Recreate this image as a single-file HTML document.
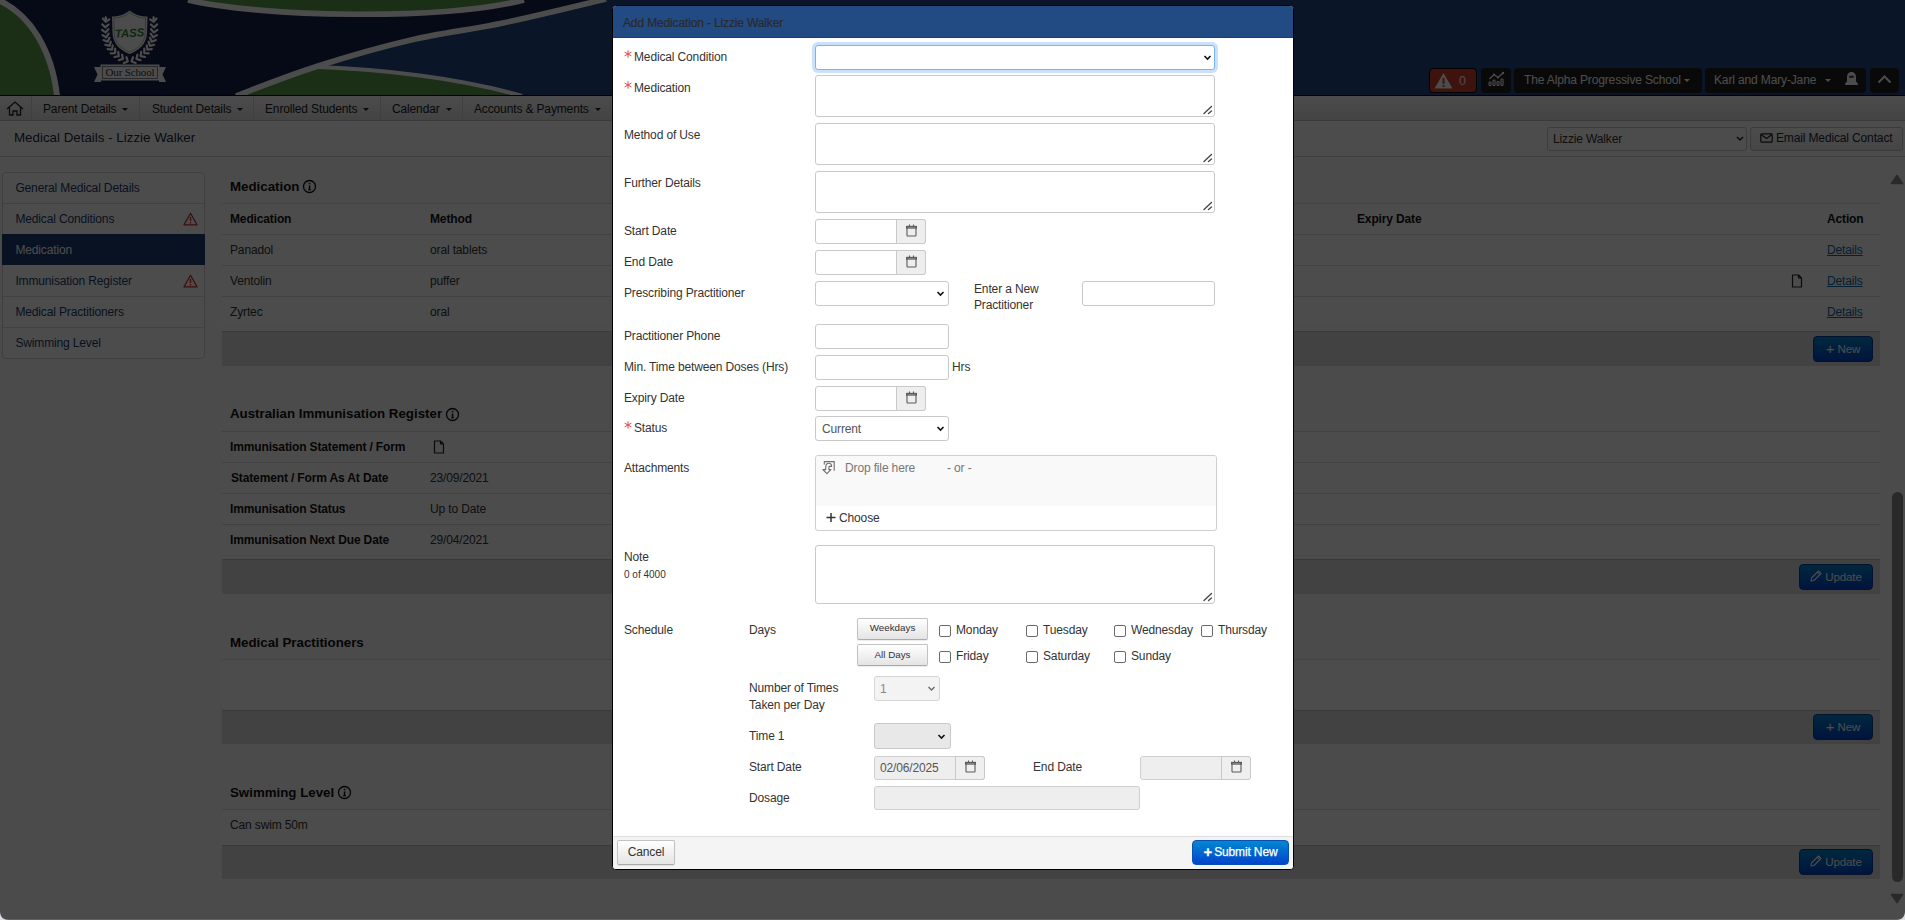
<!DOCTYPE html>
<html><head><meta charset="utf-8">
<style>
*{box-sizing:border-box}
html,body{margin:0;padding:0;width:1905px;height:920px;overflow:hidden;background:#fff}
body{font-family:"Liberation Sans",sans-serif;font-size:12px;letter-spacing:-0.14px;color:#333;position:relative}
.a{position:absolute}
.t{position:absolute;white-space:nowrap;line-height:14px}
.m{}
.navsep{position:absolute;top:96px;width:1px;height:24px;background:#d6d6d6}
.caret{display:inline-block;width:0;height:0;border-left:3px solid transparent;border-right:3px solid transparent;border-top:3px solid #222;vertical-align:middle;margin-left:6px;margin-top:-1px}
.btnp{border-radius:4px;background:linear-gradient(#0088cc,#0044cc);border:1px solid #0a3f99;color:#fff;text-align:center;line-height:24px;font-size:11.55px;white-space:nowrap}
.plus{font-size:15px;vertical-align:-1px;margin-right:3px}
.req{padding-left:10px}
.inp{border:1px solid #c9c9c9;border-radius:3px;background:#fff}
.dis{background:#f3f3f3;border-color:#d6d6d6}
.dis2{background:#eeeeee;border-color:#cfcfcf}
.addon{border:1px solid #c9c9c9;border-radius:0 3px 3px 0;background:#eeeeee}
.chev path{fill:none;stroke:#111;stroke-width:1.6}
.dchev path{stroke:#666;stroke-width:1.3}
.grip path{fill:none;stroke:#444;stroke-width:1.3;stroke-linecap:round}
.cal rect,.cal path{fill:none;stroke:#5a5a5a;stroke-width:1.1}
.cb{width:12px;height:12px;border:1px solid #6a6a6a;border-radius:2px;background:#fff}
.sbtn{letter-spacing:0;border:1px solid #c2c2c2;border-bottom-color:#aaa;border-radius:2px;background:linear-gradient(#ffffff,#e4e4e4);color:#333;text-align:center;font-size:9.8px;line-height:18px;white-space:nowrap;box-shadow:0 1px 1px rgba(0,0,0,.08)}
</style></head><body>
<!-- HEADER -->
<svg class="a" style="left:0;top:0" width="1905" height="96" viewBox="0 0 1905 96">
<rect width="1905" height="96" fill="#224a86"/>
<path d="M0,0 L606,0 L606,-1 C587.8,3.3 535.5,16.2 503,23 C470.5,29.8 441.8,32.8 411,40 C380.2,47.2 347.2,56.7 318,66 C288.8,75.3 252.3,89.8 236,96 L0,96 Z" fill="#17234f"/>
<path d="M-2,0 C30,14 52,50 57,96 L-2,96 Z" fill="#5b9d4f"/>
<path d="M-2,0 C30,14 52,50 57,96" fill="none" stroke="#fff" stroke-width="6"/>
<path d="M188,0 C260,17 440,21 524,0 Z" fill="#5b9d4f"/>
<path d="M188,0 C260,17 440,21 524,0" fill="none" stroke="#fff" stroke-width="5.6"/>
<path d="M318,66 C380,69 460,78 522,96 L236,96 C262,86 290,75 318,66 Z" fill="#5b9d4f"/>
<path d="M606,-1 C587.8,3.3 535.5,16.2 503,23 C470.5,29.8 441.8,32.8 411,40 C380.2,47.2 347.2,56.7 318,66 C288.8,75.3 252.3,89.8 236,96" fill="none" stroke="#fff" stroke-width="5.6"/>
<path d="M318,67 C380,69 460,78 522,96" fill="none" stroke="#fff" stroke-width="4.2"/>
<!-- logo -->
<g fill="#fff">
<path d="M129.7,10.5 C124,15 118,16.5 112,16.5 L112.5,33 C113,44 120,50 129.7,54 C139.5,50 146.5,44 147,33 L147.5,16.5 C141,16.5 135,15 129.7,10.5 Z"/><path d="M129.7,12.5 C124.5,16.5 119,18 113.8,18 L114.2,33 C114.8,43 121,48.5 129.7,52 C138.5,48.5 144.6,43 145.2,33 L145.6,18 C140.5,18 135,16.5 129.7,12.5 Z" fill="none" stroke="#888" stroke-width="0.6"/>
<g id="laurL"><ellipse cx="105.8" cy="18.5" rx="1.3" ry="2.6"/><path d="M102.9,18.5 L105.7,21.9 L109.3,19.3 M102.2,24.3 L105.3,27.4 L108.6,24.5 M102.0,29.8 L105.5,32.5 L108.4,29.2 M102.5,35.1 L106.2,37.3 L108.7,33.7 M103.5,40.1 L107.6,41.8 L109.5,37.8 M105.2,44.8 L109.5,45.9 L110.8,41.7 M107.6,49.2 L112.0,49.7 L112.7,45.3 M110.7,53.3 L115.1,53.1 L115.1,48.7 M114.4,57.0 L118.8,56.2 L118.2,51.8 M118.8,60.2 L123.0,58.9 L122.0,54.7 M123.8,63.1 L127.8,61.4 L126.4,57.2" fill="none" stroke="#fff" stroke-width="2.2" stroke-linecap="round" stroke-linejoin="round"/></g>
<use href="#laurL" transform="translate(259.4 0) scale(-1 1)"/>
<path d="M94,67 L101,67 L101,82 L94,82 L97.5,74.5 Z"/>
<path d="M166,67 L159,67 L159,82 L166,82 L162.5,74.5 Z"/>
<rect x="100.5" y="64.5" width="59" height="16"/>
</g>
<rect x="102.5" y="66.5" width="55" height="12" fill="none" stroke="#555" stroke-width="0.7"/>
<text x="130" y="76" text-anchor="middle" font-family="Liberation Serif" font-size="11" fill="#333">Our School</text>
<text x="129.5" y="37" text-anchor="middle" font-family="Liberation Sans" font-weight="bold" font-style="italic" font-size="11.5" fill="#2f8a2a" transform="rotate(-3 129.5 33)">TASS</text>
</svg>
<div class="a" style="left:0;top:95px;width:1905px;height:1px;background:#000"></div>

<!-- header buttons -->
<div class="a" style="left:1429px;top:68px;width:48px;height:25px;background:#cf3f2c;border:1px solid #000;border-radius:4px"></div>
<svg class="a" style="left:1434px;top:72px" width="20" height="17" viewBox="0 0 20 17"><path d="M9.5,1 L18.5,16.5 L0.5,16.5 Z" fill="#fff"/><rect x="8.6" y="6" width="1.9" height="6" fill="#cf3f2c"/><rect x="8.6" y="13" width="1.9" height="1.9" fill="#cf3f2c"/></svg>
<div class="t" style="left:1459px;top:74px;color:#fff;font-size:12.5px">0</div>
<div class="a" style="left:1481px;top:68px;width:30px;height:25px;background:#1f1f1f;border-radius:4px"></div>
<svg class="a" style="left:1488px;top:71px" width="17" height="15" viewBox="0 0 17 15"><path d="M1.5,8 L6,3.5 L10,6.5 L15,2" fill="none" stroke="#fff" stroke-width="1.3"/><circle cx="6" cy="3.5" r="1.1" fill="#fff"/><circle cx="10" cy="6.5" r="1.1" fill="#fff"/><circle cx="15" cy="2" r="1.2" fill="#fff"/><g fill="none" stroke="#fff" stroke-width="1.1"><rect x="1" y="11" width="2" height="3.5" rx="0.8"/><rect x="5" y="9" width="2" height="5.5" rx="0.8"/><rect x="9" y="10.5" width="2" height="4" rx="0.8"/><rect x="13" y="8" width="2" height="6.5" rx="0.8"/></g></svg>
<div class="a" style="left:1514px;top:68px;width:188px;height:25px;background:#1f1f1f;border-radius:4px"></div>
<div class="t" style="left:1524px;top:73px;color:#fff">The Alpha Progressive School</div>
<div class="a" style="left:1684px;top:79px;border-left:3px solid transparent;border-right:3px solid transparent;border-top:3px solid #fff"></div>
<div class="a" style="left:1705px;top:68px;width:161px;height:25px;background:#1f1f1f;border-radius:4px"></div>
<div class="t" style="left:1714px;top:73px;color:#fff">Karl and Mary-Jane</div>
<div class="a" style="left:1825px;top:79px;border-left:3px solid transparent;border-right:3px solid transparent;border-top:3px solid #fff"></div>
<svg class="a" style="left:1844px;top:71px" width="15" height="15" viewBox="0 0 15 15"><path d="M7.5,1 C4.2,1 3,3.5 3,6.5 L3,10 C3,11 1.2,11.8 1,13 C1,13.6 1.5,14 2.2,14 L12.8,14 C13.5,14 14,13.6 14,13 C13.8,11.8 12,11 12,10 L12,6.5 C12,3.5 10.8,1 7.5,1 Z" fill="#fff"/><rect x="5.2" y="4.8" width="4.6" height="2" rx="0.6" fill="#333"/></svg>
<div class="a" style="left:1870px;top:68px;width:29px;height:25px;background:#1f1f1f;border-radius:4px"></div>
<svg class="a" style="left:1877px;top:74px" width="15" height="10" viewBox="0 0 15 10"><path d="M1.5,8.5 L7.5,2.5 L13.5,8.5" fill="none" stroke="#fff" stroke-width="2"/></svg>

<!-- NAV -->
<div class="a" style="left:0;top:96px;width:1905px;height:25px;background:linear-gradient(#fdfdfd,#e2e2e2);border-bottom:1px solid #c4c4c4"></div>
<svg class="a" style="left:6px;top:101px" width="18" height="15" viewBox="0 0 18 15" fill="none" stroke="#222" stroke-width="1.3"><path d="M1,8 L9,1 L17,8"/><path d="M3.5,6 L3.5,14 L7,14 L7,10 L11,10 L11,14 L14.5,14 L14.5,6"/></svg>
<div class="navsep" style="left:31px"></div>
<div class="t" style="left:43px;top:102px;color:#222">Parent Details<span class="caret"></span></div>
<div class="navsep" style="left:139px"></div>
<div class="t" style="left:152px;top:102px;color:#222">Student Details<span class="caret"></span></div>
<div class="navsep" style="left:253px"></div>
<div class="t" style="left:265px;top:102px;color:#222">Enrolled Students<span class="caret"></span></div>
<div class="navsep" style="left:380px"></div>
<div class="t" style="left:392px;top:102px;color:#222">Calendar<span class="caret"></span></div>
<div class="navsep" style="left:462px"></div>
<div class="t" style="left:474px;top:102px;color:#222">Accounts &amp; Payments<span class="caret"></span></div>
<div class="navsep" style="left:612px"></div>

<!-- TITLE BAR -->
<div class="a" style="left:0;top:121px;width:1905px;height:36px;background:#fff;border-bottom:1px solid #d8d8d8"></div>
<div class="t" style="left:14px;top:130px;font-size:13.35px;letter-spacing:0;line-height:16px;color:#1a2a44">Medical Details - Lizzie Walker</div>
<div class="a" style="left:1547px;top:127px;width:200px;height:24px;background:#fff;border:1px solid #c8c8c8;border-radius:3px"></div>
<div class="t" style="left:1553px;top:132px;color:#333">Lizzie Walker</div>
<svg class="a" style="left:1736px;top:136px" width="8" height="6" viewBox="0 0 8 6"><path d="M1,1 L4,4 L7,1" fill="none" stroke="#222" stroke-width="1.5"/></svg>
<div class="a" style="left:1750px;top:127px;width:153px;height:24px;background:linear-gradient(#fff,#e8e8e8);border:1px solid #c4c4c4;border-radius:3px"></div>
<svg class="a" style="left:1760px;top:133px" width="13" height="10" viewBox="0 0 13 10" fill="none" stroke="#222" stroke-width="1.2"><rect x="0.8" y="0.8" width="11.4" height="8.4" rx="1"/><path d="M1,1.5 L6.5,5.5 L12,1.5"/></svg>
<div class="t" style="left:1776px;top:131px;color:#1a2a44">Email Medical Contact</div>

<!-- BODY -->
<div class="a" style="left:0;top:157px;width:1905px;height:763px;background:#fbfbfb"></div>
<!-- SIDEBAR -->
<div class="a" style="left:2px;top:172px;width:203px;height:187px;background:#fff;border:1px solid #d4d4d4;border-radius:4px"></div>
<div class="a" style="left:3px;top:203px;width:201px;height:1px;background:#dcdcdc"></div>
<div class="a" style="left:3px;top:296px;width:201px;height:1px;background:#dcdcdc"></div>
<div class="a" style="left:3px;top:327px;width:201px;height:1px;background:#dcdcdc"></div>
<div class="a" style="left:2px;top:234px;width:203px;height:31px;background:#1c3c72"></div>
<div class="t" style="left:15.4px;top:181px;color:#1d3b6c">General Medical Details</div>
<div class="t" style="left:15.4px;top:212px;color:#1d3b6c">Medical Conditions</div>
<div class="t" style="left:15.4px;top:243px;color:#fff">Medication</div>
<div class="t" style="left:15.4px;top:274px;color:#1d3b6c">Immunisation Register</div>
<div class="t" style="left:15.4px;top:305px;color:#1d3b6c">Medical Practitioners</div>
<div class="t" style="left:15.4px;top:336px;color:#1d3b6c">Swimming Level</div>
<svg class="a" style="left:183px;top:212px" width="15" height="14" viewBox="0 0 15 14"><path d="M7.5,1.2 L14,12.8 L1,12.8 Z" fill="none" stroke="#c9302c" stroke-width="1.3" stroke-linejoin="round"/><rect x="6.8" y="5" width="1.4" height="4" fill="#c9302c"/><rect x="6.8" y="10" width="1.4" height="1.4" fill="#c9302c"/></svg>
<svg class="a" style="left:183px;top:274px" width="15" height="14" viewBox="0 0 15 14"><path d="M7.5,1.2 L14,12.8 L1,12.8 Z" fill="none" stroke="#c9302c" stroke-width="1.3" stroke-linejoin="round"/><rect x="6.8" y="5" width="1.4" height="4" fill="#c9302c"/><rect x="6.8" y="10" width="1.4" height="1.4" fill="#c9302c"/></svg>

<!-- MEDICATION SECTION -->
<div class="a" style="left:222px;top:203px;width:1658px;height:128px;background:#fff"></div>
<div class="t" style="left:230px;top:179px;font-weight:bold;font-size:13.3px;letter-spacing:0;line-height:16px;color:#111">Medication</div>
<svg class="a" style="left:302px;top:179px" width="15" height="15" viewBox="0 0 15 15"><circle cx="7.5" cy="7.5" r="6" fill="none" stroke="#111" stroke-width="1.3"/><rect x="6.8" y="6.5" width="1.5" height="4.5" fill="#111"/><rect x="6.8" y="3.8" width="1.5" height="1.5" fill="#111"/><rect x="6" y="10.3" width="3" height="1" fill="#111"/></svg>
<div class="a" style="left:222px;top:203px;width:1658px;height:1px;background:#ddd"></div>
<div class="a" style="left:222px;top:234px;width:1658px;height:1px;background:#ddd"></div>
<div class="a" style="left:222px;top:265px;width:1658px;height:1px;background:#ddd"></div>
<div class="a" style="left:222px;top:296px;width:1658px;height:1px;background:#ddd"></div>
<div class="a" style="left:222px;top:326px;width:1658px;height:1px;background:#f6f6f6"></div>
<div class="t" style="left:230px;top:212px;font-weight:bold;color:#111">Medication</div>
<div class="t" style="left:430px;top:212px;font-weight:bold;color:#111">Method</div>
<div class="t" style="left:1357px;top:212px;font-weight:bold;color:#111">Expiry Date</div>
<div class="t" style="left:1827px;top:212px;font-weight:bold;color:#111">Action</div>
<div class="t" style="left:230px;top:243px">Panadol</div>
<div class="t" style="left:430px;top:243px">oral tablets</div>
<div class="t" style="left:230px;top:274px">Ventolin</div>
<div class="t" style="left:430px;top:274px">puffer</div>
<div class="t" style="left:230px;top:305px">Zyrtec</div>
<div class="t" style="left:430px;top:305px">oral</div>
<div class="t" style="left:1827px;top:243px;color:#0b6aa8;text-decoration:underline">Details</div>
<div class="t" style="left:1827px;top:274px;color:#0b6aa8;text-decoration:underline">Details</div>
<div class="t" style="left:1827px;top:305px;color:#0b6aa8;text-decoration:underline">Details</div>
<svg class="a" style="left:1791px;top:274px" width="12" height="14" viewBox="0 0 12 14"><path d="M1.5,1 L7.5,1 L10.5,4 L10.5,13 L1.5,13 Z M7.5,1 L7.5,4 L10.5,4" fill="none" stroke="#222" stroke-width="1.2" stroke-linejoin="round"/></svg>
<div class="a" style="left:222px;top:331px;width:1658px;height:35px;background:#dedede;border-top:1px solid #c4c4c4"></div>
<div class="btnp a" style="left:1813px;top:336px;width:60px;height:26px"><span class="plus">+</span>New</div>

<!-- IMMUNISATION -->
<div class="a" style="left:222px;top:431px;width:1658px;height:128px;background:#fff"></div>
<div class="t" style="left:230px;top:406px;font-weight:bold;font-size:13.3px;letter-spacing:0;line-height:16px;color:#111">Australian Immunisation Register</div>
<svg class="a" style="left:445px;top:407px" width="15" height="15" viewBox="0 0 15 15"><circle cx="7.5" cy="7.5" r="6" fill="none" stroke="#111" stroke-width="1.3"/><rect x="6.8" y="6.5" width="1.5" height="4.5" fill="#111"/><rect x="6.8" y="3.8" width="1.5" height="1.5" fill="#111"/><rect x="6" y="10.3" width="3" height="1" fill="#111"/></svg>
<div class="a" style="left:222px;top:431px;width:1658px;height:1px;background:#ddd"></div>
<div class="a" style="left:222px;top:462px;width:1658px;height:1px;background:#ddd"></div>
<div class="a" style="left:222px;top:493px;width:1658px;height:1px;background:#ddd"></div>
<div class="a" style="left:222px;top:524px;width:1658px;height:1px;background:#ddd"></div>
<div class="a" style="left:222px;top:555px;width:1658px;height:1px;background:#f6f6f6"></div>
<div class="t" style="left:230px;top:440px;font-weight:bold;color:#111">Immunisation Statement / Form</div>
<svg class="a" style="left:433px;top:440px" width="12" height="14" viewBox="0 0 12 14"><path d="M1.5,1 L7.5,1 L10.5,4 L10.5,13 L1.5,13 Z M7.5,1 L7.5,4 L10.5,4" fill="none" stroke="#222" stroke-width="1.2" stroke-linejoin="round"/></svg>
<div class="t" style="left:231px;top:471px;font-weight:bold;color:#111">Statement / Form As At Date</div>
<div class="t" style="left:430px;top:471px">23/09/2021</div>
<div class="t" style="left:230px;top:502px;font-weight:bold;color:#111">Immunisation Status</div>
<div class="t" style="left:430px;top:502px">Up to Date</div>
<div class="t" style="left:230px;top:533px;font-weight:bold;color:#111">Immunisation Next Due Date</div>
<div class="t" style="left:430px;top:533px">29/04/2021</div>
<div class="a" style="left:222px;top:559px;width:1658px;height:35px;background:#dedede;border-top:1px solid #c4c4c4"></div>
<div class="btnp a" style="left:1799px;top:564px;width:74px;height:26px"><svg width="12" height="12" viewBox="0 0 12 12" style="margin-right:3px;vertical-align:-1px"><path d="M8.5,1 L11,3.5 L4,10.5 L1,11 L1.5,8 Z M7.3,2.2 L9.8,4.7" fill="none" stroke="#fff" stroke-width="1.1" stroke-linejoin="round"/></svg>Update</div>

<!-- PRACTITIONERS -->
<div class="a" style="left:222px;top:660px;width:1658px;height:50px;background:#fff"></div>
<div class="t" style="left:230px;top:635px;font-weight:bold;font-size:13.3px;letter-spacing:0;line-height:16px;color:#111">Medical Practitioners</div>
<div class="a" style="left:222px;top:659px;width:1658px;height:1px;background:#ddd"></div>
<div class="a" style="left:222px;top:710px;width:1658px;height:34px;background:#dedede;border-top:1px solid #c4c4c4"></div>
<div class="btnp a" style="left:1813px;top:714px;width:60px;height:26px"><span class="plus">+</span>New</div>

<!-- SWIMMING -->
<div class="a" style="left:222px;top:809px;width:1658px;height:36px;background:#fff"></div>
<div class="t" style="left:230px;top:785px;font-weight:bold;font-size:13.3px;letter-spacing:0;line-height:16px;color:#111">Swimming Level</div>
<svg class="a" style="left:337px;top:785px" width="15" height="15" viewBox="0 0 15 15"><circle cx="7.5" cy="7.5" r="6" fill="none" stroke="#111" stroke-width="1.3"/><rect x="6.8" y="6.5" width="1.5" height="4.5" fill="#111"/><rect x="6.8" y="3.8" width="1.5" height="1.5" fill="#111"/><rect x="6" y="10.3" width="3" height="1" fill="#111"/></svg>
<div class="a" style="left:222px;top:809px;width:1658px;height:1px;background:#ddd"></div>
<div class="t" style="left:230px;top:818px">Can swim 50m</div>
<div class="a" style="left:222px;top:845px;width:1658px;height:34px;background:#dedede;border-top:1px solid #c4c4c4"></div>
<div class="btnp a" style="left:1799px;top:849px;width:74px;height:26px"><svg width="12" height="12" viewBox="0 0 12 12" style="margin-right:3px;vertical-align:-1px"><path d="M8.5,1 L11,3.5 L4,10.5 L1,11 L1.5,8 Z M7.3,2.2 L9.8,4.7" fill="none" stroke="#fff" stroke-width="1.1" stroke-linejoin="round"/></svg>Update</div>

<!-- SCROLLBAR -->
<svg class="a" style="left:1890px;top:174px" width="14" height="11" viewBox="0 0 14 11"><path d="M7,1.5 L12.5,9.5 L1.5,9.5 Z" fill="#8a8a8a" stroke="#8a8a8a" stroke-width="1.5" stroke-linejoin="round"/></svg>
<div class="a" style="left:1892px;top:492px;width:11px;height:390px;background:#8a8a8a;border-radius:6px"></div>
<svg class="a" style="left:1890px;top:893px" width="14" height="11" viewBox="0 0 14 11"><path d="M1.5,1.5 L12.5,1.5 L7,9.5 Z" fill="#8a8a8a" stroke="#8a8a8a" stroke-width="1.5" stroke-linejoin="round"/></svg>
<div class="a" style="left:0;top:0;width:1905px;height:920px;background:rgba(0,0,0,.7)"></div>
<!-- MODAL -->
<div class="a" style="left:612px;top:5px;width:682px;height:865px;background:#fff;border:1px solid #000;border-radius:4px;overflow:hidden">
  <div class="a" style="left:0;top:0;width:680px;height:32px;background:#224a83;border-bottom:1px solid #1a3f72"></div>
  <div class="a" style="left:0;top:830px;width:680px;height:34px;background:#f4f4f4;border-top:1px solid #dedede"></div>
</div>
<div class="t" style="left:623px;top:16px;color:#2a2a2a;-webkit-text-stroke:0.2px #2a2a2a">Add Medication - Lizzie Walker</div>

<!-- labels -->
<svg class="a" style="left:624px;top:50px" width="8" height="8" viewBox="0 0 8 8"><path d="M4,0.3 L4,7.7 M0.6,2.1 L7.4,5.9 M0.6,5.9 L7.4,2.1" stroke="#e0474f" stroke-width="1"/></svg>
<div class="t m req" style="left:624px;top:50px">Medical Condition</div>
<svg class="a" style="left:624px;top:81px" width="8" height="8" viewBox="0 0 8 8"><path d="M4,0.3 L4,7.7 M0.6,2.1 L7.4,5.9 M0.6,5.9 L7.4,2.1" stroke="#e0474f" stroke-width="1"/></svg>
<div class="t m req" style="left:624px;top:81px">Medication</div>
<div class="t m" style="left:624px;top:128px">Method of Use</div>
<div class="t m" style="left:624px;top:176px">Further Details</div>
<div class="t m" style="left:624px;top:224px">Start Date</div>
<div class="t m" style="left:624px;top:255px">End Date</div>
<div class="t m" style="left:624px;top:286px">Prescribing Practitioner</div>
<div class="t m" style="left:974px;top:280.6px;line-height:16.1px">Enter a New<br>Practitioner</div>
<div class="t m" style="left:624px;top:329px">Practitioner Phone</div>
<div class="t m" style="left:624px;top:360px">Min. Time between Doses (Hrs)</div>
<div class="t m" style="left:952px;top:360px">Hrs</div>
<div class="t m" style="left:624px;top:391px">Expiry Date</div>
<svg class="a" style="left:624px;top:421px" width="8" height="8" viewBox="0 0 8 8"><path d="M4,0.3 L4,7.7 M0.6,2.1 L7.4,5.9 M0.6,5.9 L7.4,2.1" stroke="#e0474f" stroke-width="1"/></svg>
<div class="t m req" style="left:624px;top:421px">Status</div>
<div class="t m" style="left:624px;top:461px">Attachments</div>
<div class="t m" style="left:624px;top:550px">Note</div>
<div class="t m" style="left:624px;top:569px;font-size:10px;letter-spacing:0;line-height:12px">0 of 4000</div>
<div class="t m" style="left:624px;top:623px">Schedule</div>
<div class="t m" style="left:749px;top:623px">Days</div>
<div class="t m" style="left:749px;top:680px;line-height:17px">Number of Times<br>Taken per Day</div>
<div class="t m" style="left:749px;top:729px">Time 1</div>
<div class="t m" style="left:749px;top:760px">Start Date</div>
<div class="t m" style="left:1033px;top:760px">End Date</div>
<div class="t m" style="left:749px;top:791px">Dosage</div>

<!-- inputs -->
<div class="a inp" style="left:815px;top:45px;width:400px;height:25px;border-color:#79b4f2;box-shadow:0 0 0 3px rgba(120,180,245,.4)"></div>
<svg class="a chev" style="left:1203px;top:54px" width="9" height="7" viewBox="0 0 9 7"><path d="M1.5,2 L4.5,5 L7.5,2"/></svg>
<div class="a inp" style="left:815px;top:75px;width:400px;height:42px"></div>
<div class="a inp" style="left:815px;top:123px;width:400px;height:42px"></div>
<div class="a inp" style="left:815px;top:171px;width:400px;height:42px"></div>
<svg class="a grip" style="left:1203px;top:105px" width="10" height="10" viewBox="0 0 10 10"><path d="M1,8.5 L8.5,1.5 M5.5,8.5 L8.5,6"/></svg>
<svg class="a grip" style="left:1203px;top:153px" width="10" height="10" viewBox="0 0 10 10"><path d="M1,8.5 L8.5,1.5 M5.5,8.5 L8.5,6"/></svg>
<svg class="a grip" style="left:1203px;top:201px" width="10" height="10" viewBox="0 0 10 10"><path d="M1,8.5 L8.5,1.5 M5.5,8.5 L8.5,6"/></svg>

<div class="a inp" style="left:815px;top:219px;width:111px;height:25px"></div>
<div class="a addon" style="left:896px;top:219px;width:30px;height:25px"></div>
<svg class="a cal" style="left:906px;top:224px" width="11" height="13" viewBox="0 0 11 13"><rect x="1" y="3" width="9" height="9" rx="0.8"/><rect x="0.5" y="2.4" width="10" height="1.7" fill="#4a4a4a" stroke="none"/><path d="M3.5,0.5 L3.5,2.5 M7.5,0.5 L7.5,2.5"/></svg>
<div class="a inp" style="left:815px;top:250px;width:111px;height:25px"></div>
<div class="a addon" style="left:896px;top:250px;width:30px;height:25px"></div>
<svg class="a cal" style="left:906px;top:255px" width="11" height="13" viewBox="0 0 11 13"><rect x="1" y="3" width="9" height="9" rx="0.8"/><rect x="0.5" y="2.4" width="10" height="1.7" fill="#4a4a4a" stroke="none"/><path d="M3.5,0.5 L3.5,2.5 M7.5,0.5 L7.5,2.5"/></svg>
<div class="a inp" style="left:815px;top:281px;width:134px;height:25px"></div>
<svg class="a chev" style="left:936px;top:290px" width="9" height="7" viewBox="0 0 9 7"><path d="M1.5,2 L4.5,5 L7.5,2"/></svg>
<div class="a inp" style="left:1082px;top:281px;width:133px;height:25px"></div>
<div class="a inp" style="left:815px;top:324px;width:134px;height:25px"></div>
<div class="a inp" style="left:815px;top:355px;width:134px;height:25px"></div>
<div class="a inp" style="left:815px;top:386px;width:111px;height:25px"></div>
<div class="a addon" style="left:896px;top:386px;width:30px;height:25px"></div>
<svg class="a cal" style="left:906px;top:391px" width="11" height="13" viewBox="0 0 11 13"><rect x="1" y="3" width="9" height="9" rx="0.8"/><rect x="0.5" y="2.4" width="10" height="1.7" fill="#4a4a4a" stroke="none"/><path d="M3.5,0.5 L3.5,2.5 M7.5,0.5 L7.5,2.5"/></svg>
<div class="a inp" style="left:815px;top:416px;width:134px;height:25px"></div>
<div class="t" style="left:822px;top:422px;color:#555">Current</div>
<svg class="a chev" style="left:936px;top:425px" width="9" height="7" viewBox="0 0 9 7"><path d="M1.5,2 L4.5,5 L7.5,2"/></svg>

<!-- attachments -->
<div class="a" style="left:815px;top:455px;width:402px;height:76px;border:1px solid #cfcfcf;border-radius:3px;background:#fff;overflow:hidden"><div style="height:50px;background:#f9f9f9"></div></div>
<svg class="a" style="left:816px;top:456px" width="24" height="24" viewBox="0 0 24 24" fill="none" stroke="#6e6e6e" stroke-width="1.1" stroke-linejoin="round"><path d="M8.3,8.4 L8.3,5.6 L18.2,5.6 L18.2,14.8"/><path d="M15.6,10.4 L13.1,10.4 L12.9,13.6 L14.9,13.6 L10.9,17.7 L6.9,13.6 L9.6,13.6 L9.9,10 C10.1,8 11.4,7.2 12.8,7.2 C14.6,7.2 15.9,8.4 15.6,10.4 Z"/></svg>
<div class="t" style="left:845px;top:461px;color:#777">Drop file here</div>
<div class="t" style="left:947px;top:461px;color:#777">- or -</div>
<svg class="a" style="left:826px;top:513px" width="10" height="9" viewBox="0 0 10 9"><path d="M5,0 L5,9 M0.5,4.5 L9.5,4.5" stroke="#333" stroke-width="1.5"/></svg>
<div class="t" style="left:839px;top:511px;color:#333">Choose</div>

<div class="a inp" style="left:815px;top:545px;width:400px;height:59px"></div>
<svg class="a grip" style="left:1203px;top:592px" width="10" height="10" viewBox="0 0 10 10"><path d="M1,8.5 L8.5,1.5 M5.5,8.5 L8.5,6"/></svg>

<!-- schedule -->
<div class="a sbtn" style="left:857px;top:618px;width:71px;height:22px">Weekdays</div>
<div class="a sbtn" style="left:857px;top:644px;width:71px;height:22px;line-height:20px">All Days</div>
<div class="a cb" style="left:939px;top:625px"></div>
<div class="t" style="left:956px;top:623px">Monday</div>
<div class="a cb" style="left:1026px;top:625px"></div>
<div class="t" style="left:1043px;top:623px">Tuesday</div>
<div class="a cb" style="left:1114px;top:625px"></div>
<div class="t" style="left:1131px;top:623px">Wednesday</div>
<div class="a cb" style="left:1201px;top:625px"></div>
<div class="t" style="left:1218px;top:623px">Thursday</div>
<div class="a cb" style="left:939px;top:651px"></div>
<div class="t" style="left:956px;top:649px">Friday</div>
<div class="a cb" style="left:1026px;top:651px"></div>
<div class="t" style="left:1043px;top:649px">Saturday</div>
<div class="a cb" style="left:1114px;top:651px"></div>
<div class="t" style="left:1131px;top:649px">Sunday</div>

<div class="a inp dis" style="left:874px;top:676px;width:66px;height:25px"></div>
<div class="t" style="left:880px;top:682px;color:#888">1</div>
<svg class="a chev dchev" style="left:927px;top:685px" width="9" height="7" viewBox="0 0 9 7"><path d="M1.5,2 L4.5,5 L7.5,2"/></svg>
<div class="a inp" style="left:874px;top:723px;width:77px;height:26px;background:#e8e8e8"></div>
<svg class="a chev" style="left:937px;top:733px" width="9" height="7" viewBox="0 0 9 7"><path d="M1.5,2 L4.5,5 L7.5,2"/></svg>

<div class="a inp dis2" style="left:874px;top:756px;width:111px;height:24px"></div>
<div class="a addon" style="left:955px;top:756px;width:30px;height:24px;background:#efefef"></div>
<div class="t" style="left:880px;top:761px;color:#555">02/06/2025</div>
<svg class="a cal" style="left:965px;top:760px" width="11" height="13" viewBox="0 0 11 13"><rect x="1" y="3" width="9" height="9" rx="0.8"/><rect x="0.5" y="2.4" width="10" height="1.7" fill="#4a4a4a" stroke="none"/><path d="M3.5,0.5 L3.5,2.5 M7.5,0.5 L7.5,2.5"/></svg>
<div class="a inp dis2" style="left:1140px;top:756px;width:111px;height:24px"></div>
<div class="a addon" style="left:1221px;top:756px;width:30px;height:24px;background:#efefef"></div>
<svg class="a cal" style="left:1231px;top:760px" width="11" height="13" viewBox="0 0 11 13"><rect x="1" y="3" width="9" height="9" rx="0.8"/><rect x="0.5" y="2.4" width="10" height="1.7" fill="#4a4a4a" stroke="none"/><path d="M3.5,0.5 L3.5,2.5 M7.5,0.5 L7.5,2.5"/></svg>
<div class="a inp dis2" style="left:874px;top:786px;width:266px;height:24px"></div>

<!-- footer buttons -->
<div class="a sbtn" style="left:617px;top:840px;width:58px;height:25px;font-size:12px;letter-spacing:-0.14px;line-height:22.5px">Cancel</div>
<div class="a" style="left:1192px;top:840px;width:97px;height:25px;border-radius:4px;background:linear-gradient(#0288d1,#0044cc);border:1px solid #0a4fb5;color:#fff;font-size:12px;line-height:21px;text-align:center;white-space:nowrap;-webkit-text-stroke:0.25px #fff"><span style="font-size:15px;font-weight:bold;vertical-align:-1px;margin-right:2px">+</span>Submit New</div>
<!-- window bottom edge -->
<div class="a" style="left:0;top:919px;width:1905px;height:1px;background:#626262"></div>
<svg class="a" style="left:0;top:912px" width="8" height="8" viewBox="0 0 8 8"><path d="M0,0 C0.5,5 3,7.5 8,8 L0,8 Z" fill="#dcdde1"/></svg>
<svg class="a" style="left:1897px;top:912px" width="8" height="8" viewBox="0 0 8 8"><path d="M8,0 C7.5,5 5,7.5 0,8 L8,8 Z" fill="#dcdde1"/></svg>
</body></html>
